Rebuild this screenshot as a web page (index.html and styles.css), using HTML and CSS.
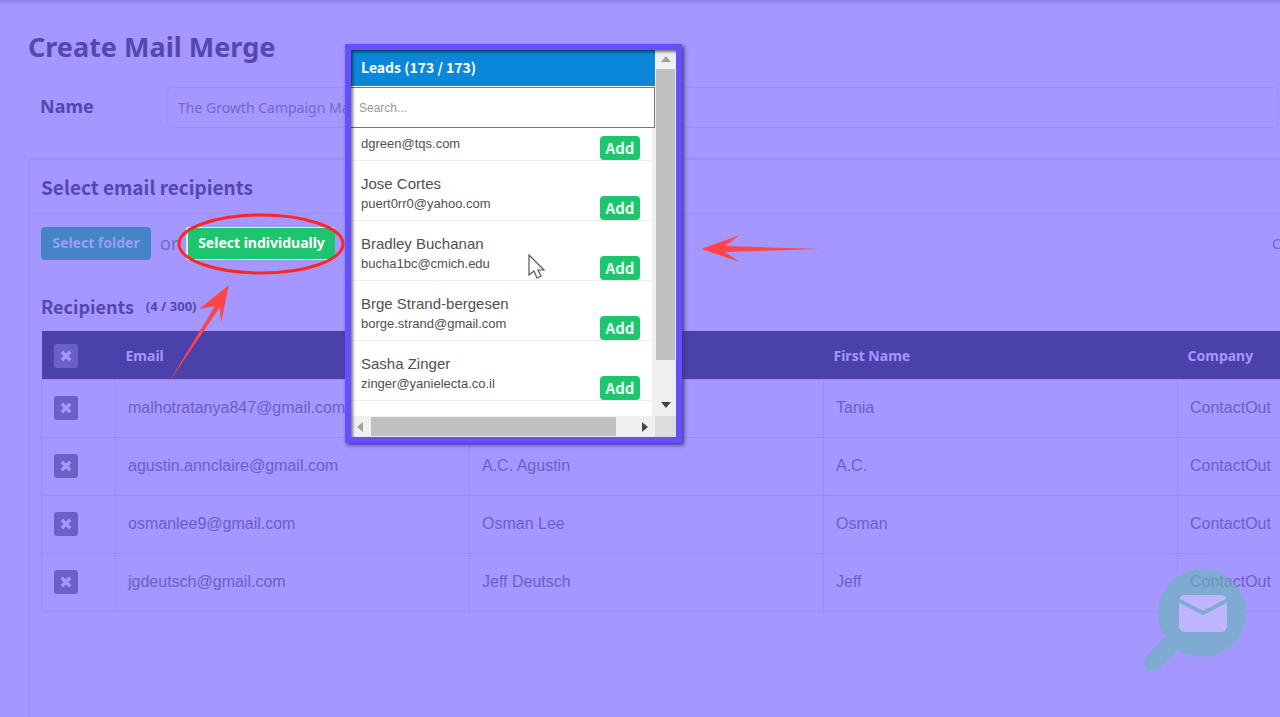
FILE: index.html
```html
<!DOCTYPE html>
<html lang="en">
<head>
<meta charset="utf-8">
<title>Create Mail Merge</title>
<link rel="stylesheet" href="styles.css">
</head>
<body>
<svg class="defs" aria-hidden="true"><symbol id="x" viewBox="0 0 12 12"><path d="M3 3l6 6M9 3l-6 6" stroke="currentColor" stroke-width="3.4" stroke-linecap="square"/></symbol></svg>
<main class="page">
  <h1 class="title">Create Mail Merge</h1>
  <div class="name-row">
    <label class="name-label" for="name">Name</label>
    <input class="name-input" id="name" type="text" value="The Growth Campaign Ma">
  </div>
  <section class="panel">
    <h2 class="panel-title">Select email recipients</h2>
    <div class="panel-body">
      <div class="actions">
        <button class="btn btn-folder" type="button">Select folder</button>
        <span class="or">or</span>
        <button class="btn btn-individual" type="button">Select individually</button>
        <span class="edge">C</span>
      </div>
      <h3 class="recipients">Recipients <span class="count">(4 / 300)</span></h3>
      <table class="table">
        <colgroup><col class="col-check"><col><col><col><col></colgroup>
        <thead>
          <tr><th><button class="remove" type="button" aria-label="Remove all"><svg><use href="#x"/></svg></button></th><th>Email</th><th></th><th>First Name</th><th>Company</th></tr>
        </thead>
        <tbody>
          <tr><td><button class="remove" type="button" aria-label="Remove"><svg><use href="#x"/></svg></button></td><td>malhotratanya847@gmail.com</td><td></td><td>Tania</td><td>ContactOut</td></tr>
          <tr><td><button class="remove" type="button" aria-label="Remove"><svg><use href="#x"/></svg></button></td><td>agustin.annclaire@gmail.com</td><td>A.C. Agustin</td><td>A.C.</td><td>ContactOut</td></tr>
          <tr><td><button class="remove" type="button" aria-label="Remove"><svg><use href="#x"/></svg></button></td><td>osmanlee9@gmail.com</td><td>Osman Lee</td><td>Osman</td><td>ContactOut</td></tr>
          <tr><td><button class="remove" type="button" aria-label="Remove"><svg><use href="#x"/></svg></button></td><td>jgdeutsch@gmail.com</td><td>Jeff Deutsch</td><td>Jeff</td><td>ContactOut</td></tr>
        </tbody>
      </table>
    </div>
  </section>

  <aside class="leads">
    <div class="leads-main">
      <h2 class="leads-title">Leads (173 / 173)</h2>
      <input class="search" type="text" placeholder="Search..." aria-label="Search leads">
      <ul class="list">
        <li class="lead lead-cut"><div><div class="mail">dgreen@tqs.com</div></div><button class="add" type="button">Add</button></li>
        <li class="lead"><div><div class="who">Jose Cortes</div><div class="mail">puert0rr0@yahoo.com</div></div><button class="add" type="button">Add</button></li>
        <li class="lead"><div><div class="who">Bradley Buchanan</div><div class="mail">bucha1bc@cmich.edu</div></div><button class="add" type="button">Add</button></li>
        <li class="lead"><div><div class="who">Brge Strand-bergesen</div><div class="mail">borge.strand@gmail.com</div></div><button class="add" type="button">Add</button></li>
        <li class="lead"><div><div class="who">Sasha Zinger</div><div class="mail">zinger@yanielecta.co.il</div></div><button class="add" type="button">Add</button></li>
      </ul>
    </div>
    <div class="vbar">
      <svg class="arrow faded" viewBox="0 0 10 6"><path d="M0 6L5 0l5 6z"/></svg>
      <div class="vthumb"></div>
      <svg class="arrow" viewBox="0 0 10 6"><path d="M0 0l5 6 5-6z"/></svg>
    </div>
    <div class="hbar">
      <svg class="harrow faded" viewBox="0 0 6 10"><path d="M6 0L0 5l6 5z"/></svg>
      <div class="hthumb"></div>
      <svg class="harrow" viewBox="0 0 6 10"><path d="M0 0l6 5-6 5z"/></svg>
    </div>
    <div class="corner"></div>
  </aside>

  <svg class="cursor" viewBox="0 0 18 26"><path d="M1 1v20l5-4 3 7 4-2-3-6h6z" fill="#fff" stroke="#555" stroke-width="1.2"/></svg>
  <svg class="ring" viewBox="0 0 168 62"><ellipse cx="84" cy="31" rx="82" ry="29" fill="none" stroke="#ff2626" stroke-width="3"/></svg>
  <svg class="pointer-up" viewBox="0 0 64 102"><path d="M62 1L32 25l16-3L0 101 53 23l1 16z" fill="#ff4545"/></svg>
  <svg class="pointer-left" viewBox="0 0 120 28"><path d="M0 14L39 0 24 11l96 3-96 3 15 10z" fill="#ff4545"/></svg>
  <svg class="logo" viewBox="0 0 104 106">
    <g opacity=".62" stroke="#6ab7b8" fill="#6ab7b8"><path d="M29 76L10 95" stroke-width="18" stroke-linecap="round"/><circle cx="59" cy="46" r="44" stroke="none"/></g>
    <rect x="36" y="28" width="48" height="37" rx="6" fill="#bfb6ff"/>
    <path d="M35 33l25 13 25-13" fill="none" stroke="#80abd3" stroke-width="4"/>
  </svg>
</main>
</body>
</html>
```
FILE: styles.css
```css
* { box-sizing: border-box; }
body { margin: 0; background: #a497ff; color: #6b5fc8; font-family: "Liberation Sans", Arial, sans-serif; font-size: 16px; }
button, input { font: inherit; margin: 0; padding: 0; border: 0; }
h1, h2, h3, ul { margin: 0; padding: 0; }
.defs { display: none; }
.page {
  position: relative; height: 100vh; overflow: hidden;
  display: flex; flex-direction: column; padding: 28px 0 0 28px;
  background: linear-gradient(#8e82e3, #a497ff 5px);
}
.title { font: 700 27px/38px "Noto Sans", sans-serif; color: #5448ae; }
.name-row { display: flex; margin: 21px 1px 30px 12px; }
.name-label { width: 127px; font: 700 18px/38px "Noto Sans", sans-serif; color: #5448ae; }
.name-input {
  flex: 1; min-width: 0; height: 41px; padding: 0 10px; border: 1px solid #9b8ef7; border-radius: 4px;
  background: none; color: #7468cb; font: 14px "Noto Sans", sans-serif;
}
.panel { flex: 1; min-height: 0; border: 2px solid #9b8ef5; border-width: 2px 0 0 2px; border-radius: 4px 0 0; }
.panel-title {
  height: 54px; padding-left: 11px; border-bottom: 1px solid #9c90f8;
  font: 700 19px/54px "Noto Sans CJK SC", sans-serif; color: #5448ae;
}
.panel-body { padding: 12px 0 0 11px; }
.actions { display: flex; align-items: center; height: 34px; }
.btn { height: 33px; border-radius: 4px; font: 700 14px/30px "Noto Sans", sans-serif; white-space: nowrap; }
.btn-folder { width: 110px; background: #4584c6; color: #9b9cf4; }
.or { width: 35px; padding-left: 9px; font: 18px "Noto Sans", sans-serif; color: #7468cb; }
.btn-individual { width: 149px; border: solid #d8ecff; border-width: 1px 0 1px 2px; border-radius: 2px; background: #1dc56e; color: #fff; }
.edge { flex: none; width: 8px; margin-left: auto; overflow: hidden; font: 14px "Noto Sans", sans-serif; color: #7468cb; }
.recipients { display: flex; align-items: center; gap: 12px; margin: 30px 0 9px; font: 700 18px/32px "Noto Sans CJK SC", sans-serif; color: #5448ae; }
.count { font: 700 13px/32px "Noto Sans", sans-serif; }
.table { width: 1491px; table-layout: fixed; border-collapse: collapse; }
.col-check { width: 74px; }
.table th { height: 48px; padding: 3px 10px 0; background: #4b41ab; color: #a497ff; font: 700 14px/20px "Noto Sans", sans-serif; text-align: left; }
.table td { height: 58px; padding: 0 12px; border: 1px solid #998cf2; }
.table th:first-child { padding: 3px 12px 0; }
.remove { display: grid; place-items: center; width: 24px; height: 24px; border-radius: 3px; background: #6b5fc8; color: #a497ff; }
.remove svg { width: 12px; height: 12px; }

.leads {
  position: absolute; left: 345px; top: 44px; width: 337px; height: 399px;
  display: grid; grid-template: minmax(0, 1fr) 21px / minmax(0, 1fr) 21px;
  border: 6px solid #6550ff; background: #fff; box-shadow: 2px 2px 4px #403584;
}
.leads::after { content: ""; position: absolute; inset: 0; box-shadow: inset 2px 2px 3px rgba(0, 0, 0, .5); pointer-events: none; }
.leads-main { display: flex; flex-direction: column; overflow: hidden; }
.leads-title { height: 36px; margin-bottom: 1px; padding-left: 10px; background: #0b87da; color: #fff; font: 700 14px/34px "Noto Sans CJK SC", sans-serif; }
.search { height: 41px; flex: none; padding: 0 8px; border: 1px solid #777; border-left: 0; background: #fff; font-size: 12px; color: #444; }
.search::placeholder { color: #999; opacity: 1; }
.list { flex: 1; overflow: hidden; list-style: none; border-right: 3px solid #f1f1f1; }
.lead { display: flex; justify-content: space-between; align-items: flex-end; height: 60px; padding: 0 12px 0 10px; border-bottom: 1px solid #efefef; color: #505050; }
.lead-cut { height: 33px; }
.who { font-size: 15px; line-height: 20px; }
.mail { font-size: 13px; line-height: 20px; padding-bottom: 6px; }
.add { width: 40px; height: 24px; border-radius: 4px; background: #1dc56e; color: #e4ffee; font: 700 15px/24px "Noto Sans CJK SC", sans-serif; }
.vbar { display: flex; flex-direction: column; align-items: center; background: #f0f0f0; padding: 6px 0 8px; }
.arrow { width: 10px; height: 6px; fill: #444; }
.vthumb { width: 19px; height: 291px; margin: 7px 0 auto; background: #c0c0c0; }
.hbar { display: flex; align-items: center; padding: 0 7px 0 6px; background: #f0f0f0; }
.harrow { width: 6px; height: 10px; fill: #444; }
.faded { fill: #a0a0a0; }
.hthumb { width: 245px; height: 19px; margin: 0 auto 0 8px; background: #c0c0c0; }
.corner { background: #dcdcdc; }

.cursor, .ring, .pointer-up, .pointer-left, .logo { position: absolute; pointer-events: none; }
.cursor { left: 528px; top: 254px; width: 18px; height: 26px; }
.ring { left: 177px; top: 213px; width: 168px; height: 62px; }
.pointer-up { left: 167px; top: 284px; width: 64px; height: 102px; }
.pointer-left { left: 701px; top: 235px; width: 120px; height: 28px; }
.logo { left: 1143px; top: 567px; width: 104px; height: 106px; }
```
